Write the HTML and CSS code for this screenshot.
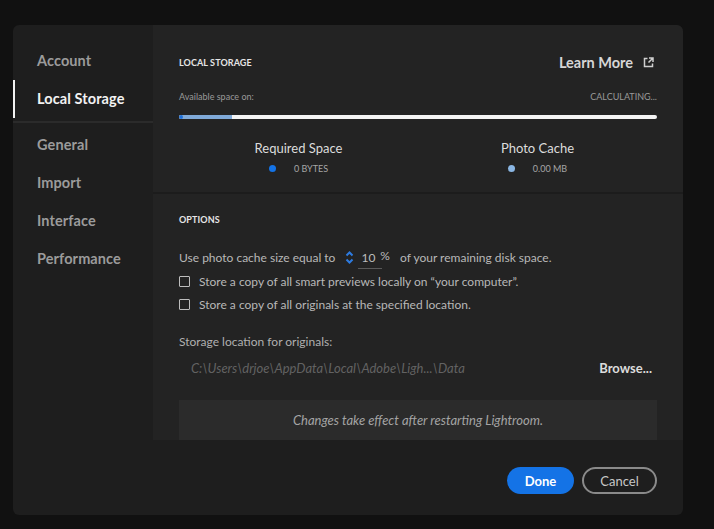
FILE: index.html
```html
<!DOCTYPE html>
<html>
<head>
<meta charset="utf-8">
<link rel="stylesheet" href="styles.css">
</head>
<body>
<div class="dialog">
  <nav class="sidebar">
    <div class="nav-item">Account</div>
    <div class="nav-item active">Local Storage</div>
    <div class="nav-sep"></div>
    <div class="nav-item">General</div>
    <div class="nav-item">Import</div>
    <div class="nav-item">Interface</div>
    <div class="nav-item">Performance</div>
  </nav>
  <div class="main">
    <div class="panel">
      <section class="storage">
        <div class="head-row">
          <div class="section-title">LOCAL STORAGE</div>
          <div class="learn">Learn More
            <svg class="ext" width="11" height="11" viewBox="0 0 11 11"><path d="M4.5 1.5H1.5V9.5H9.5V6.5" fill="none" stroke="#cfcfcf" stroke-width="1.5"/><path d="M6 1H10V5M10 1L5.5 5.5" fill="none" stroke="#cfcfcf" stroke-width="1.5"/></svg>
          </div>
        </div>
        <div class="avail-row">
          <span>Available space on:</span>
          <span>CALCULATING...</span>
        </div>
        <div class="bar"><div class="bar-fill" style="width: 53px"></div><div class="bar-cap"></div></div>
        <div class="stats">
          <div class="stat">
            <div class="stat-title">Required Space</div>
            <div class="stat-val"><span class="dot dot-req"></span><span>0 BYTES</span></div>
          </div>
          <div class="stat">
            <div class="stat-title">Photo Cache</div>
            <div class="stat-val"><span class="dot dot-cache"></span><span>0.00 MB</span></div>
          </div>
        </div>
      </section>
      <section class="options">
        <div class="section-title">OPTIONS</div>
        <div class="cache-row">
          <span>Use photo cache size equal to</span>
          <svg class="spin" width="9" height="15" viewBox="0 0 9 15"><path d="M1.5 5.5L4.5 2.5L7.5 5.5M1.5 9.5L4.5 12.5L7.5 9.5" fill="none" stroke="#2d7be0" stroke-width="2"/></svg>
          <span class="num"><span>10</span><sup>%</sup></span>
          <span>of your remaining disk space.</span>
        </div>
        <label class="check-row"><span class="box"></span>Store a copy of all smart previews locally on “your computer”.</label>
        <label class="check-row"><span class="box"></span>Store a copy of all originals at the specified location.</label>
        <div class="loc-label">Storage location for originals:</div>
        <div class="path-row">
          <span class="path">C:\Users\drjoe\AppData\Local\Adobe\Ligh...\Data</span>
          <span class="browse">Browse...</span>
        </div>
        <div class="notice">Changes take effect after restarting Lightroom.</div>
      </section>
    </div>
    <div class="footer">
      <button class="btn done">Done</button>
      <button class="btn cancel">Cancel</button>
    </div>
  </div>
</div>
</body>
</html>
```
FILE: styles.css
```css
html, body {
  margin: 0;
  padding: 0;
  background: #111111;
  width: 714px;
  height: 529px;
  overflow: hidden;
  font-family: Lato, "Open Sans", sans-serif;
}
.dialog {
  margin: 25px 0 0 13px;
  width: 670px;
  height: 490px;
  background: #1e1e1e;
  border-radius: 6px;
  display: flex;
  overflow: hidden;
}
.sidebar {
  width: 140px;
  padding-top: 17px;
  box-sizing: border-box;
}
.nav-item {
  height: 38px;
  line-height: 38px;
  padding-left: 24px;
  font-size: 14.5px;
  font-weight: 700;
  color: #9b9b9b;
  letter-spacing: 0.1px;
}
.nav-item.active {
  color: #f2f2f2;
  border-left: 2px solid #f2f2f2;
  padding-left: 22px;
}
.nav-sep {
  height: 2px;
  background: #2b2b2b;
  margin: 3px 0;
}
.main {
  flex: 1;
  display: flex;
  flex-direction: column;
}
.panel {
  height: 415px;
  background: #232323;
  border-top-right-radius: 6px;
  overflow: hidden;
}
.storage {
  padding: 27px 26px 18px 26px;
  border-bottom: 2px solid #1c1c1c;
}
.head-row {
  height: 20px;
  display: flex;
  align-items: center;
  justify-content: space-between;
}
.section-title {
  font-size: 9px;
  font-weight: 700;
  color: #e6e6e6;
  letter-spacing: 0.1px;
}
.learn {
  font-size: 14.5px;
  font-weight: 700;
  color: #d6d6d6;
  display: flex;
  align-items: center;
  gap: 10px;
  padding-right: 3px;
}
.avail-row {
  margin-top: 19px;
  height: 12px;
  line-height: 12px;
  display: flex;
  justify-content: space-between;
  font-size: 9px;
  color: #9a9a9a;
}
.bar {
  margin-top: 12px;
  height: 4px;
  background: #f4f4f4;
  border-radius: 2px;
  position: relative;
  overflow: hidden;
}
.bar-fill {
  height: 4px;
  background: #7fa9d8;
}
.bar-cap {
  position: absolute;
  left: 0;
  top: 0;
  width: 4px;
  height: 4px;
  border-radius: 2px;
  background: #1e6fd9;
}
.stats {
  margin-top: 21px;
  display: grid;
  grid-template-columns: 1fr 1fr;
}
.stat {
  display: flex;
  flex-direction: column;
  align-items: center;
}
.stat-title {
  font-size: 13px;
  line-height: 16px;
  color: #dcdcdc;
}
.stat-val {
  margin-top: 6px;
  height: 12px;
  display: flex;
  align-items: center;
  gap: 18px;
  font-size: 9px;
  color: #a6a6a6;
}
.dot {
  width: 7px;
  height: 7px;
  border-radius: 50%;
}
.dot-req { background: #1473e6; }
.dot-cache { background: #8ab6e3; }
.options {
  padding: 20px 26px 0 26px;
}
.options .section-title {
  line-height: 12px;
}
.cache-row {
  margin-top: 21px;
  height: 20px;
  display: flex;
  align-items: center;
  font-size: 12px;
  color: #b8b8b8;
}
.spin {
  margin-left: 10px;
}
.num {
  margin: 0 7px 0 4px;
  padding: 0 3px;
  display: inline-flex;
  align-items: center;
  gap: 5px;
  height: 20px;
  position: relative;
  color: #bdbdbd;
}
.num::after {
  content: "";
  position: absolute;
  left: 0;
  width: 24px;
  bottom: -2px;
  height: 1px;
  background: #5a5a5a;
}
.num sup {
  font-size: 12px;
  vertical-align: 0;
  position: relative;
  top: -2px;
}
.check-row {
  height: 23px;
  display: flex;
  align-items: center;
  font-size: 12px;
  color: #b8b8b8;
}
.check-row:first-of-type { margin-top: 3px; }
.box {
  width: 9px;
  height: 9px;
  border: 1px solid #bdbdbd;
  border-radius: 1px;
  margin-right: 9px;
}
.loc-label {
  margin-top: 18px;
  line-height: 16px;
  font-size: 12px;
  color: #b0b0b0;
}
.path-row {
  margin-top: 8px;
  height: 20px;
  display: flex;
  align-items: center;
  justify-content: space-between;
  padding-left: 12px;
  padding-right: 5px;
}
.path {
  font-size: 13px;
  font-style: italic;
  color: #626262;
}
.browse {
  font-size: 13px;
  font-weight: 700;
  color: #dcdcdc;
}
.notice {
  margin-top: 22px;
  height: 40px;
  background: #2b2b2b;
  display: flex;
  align-items: center;
  justify-content: center;
  font-size: 13px;
  font-style: italic;
  color: #a4a4a4;
}
.footer {
  flex: 1;
  display: flex;
  justify-content: flex-end;
  align-items: flex-start;
  gap: 8px;
  padding: 27px 26px 0 0;
}
.btn {
  height: 27px;
  border-radius: 14px;
  font-family: Lato, "Open Sans", sans-serif;
  font-size: 13px;
  font-weight: 700;
  padding: 0;
  cursor: pointer;
}
.done {
  width: 67px;
  background: #1473e6;
  border: none;
  color: #ffffff;
}
.cancel {
  width: 75px;
  background: transparent;
  border: 2px solid #8a8a8a;
  color: #c8c8c8;
  font-weight: 400;
}
```
